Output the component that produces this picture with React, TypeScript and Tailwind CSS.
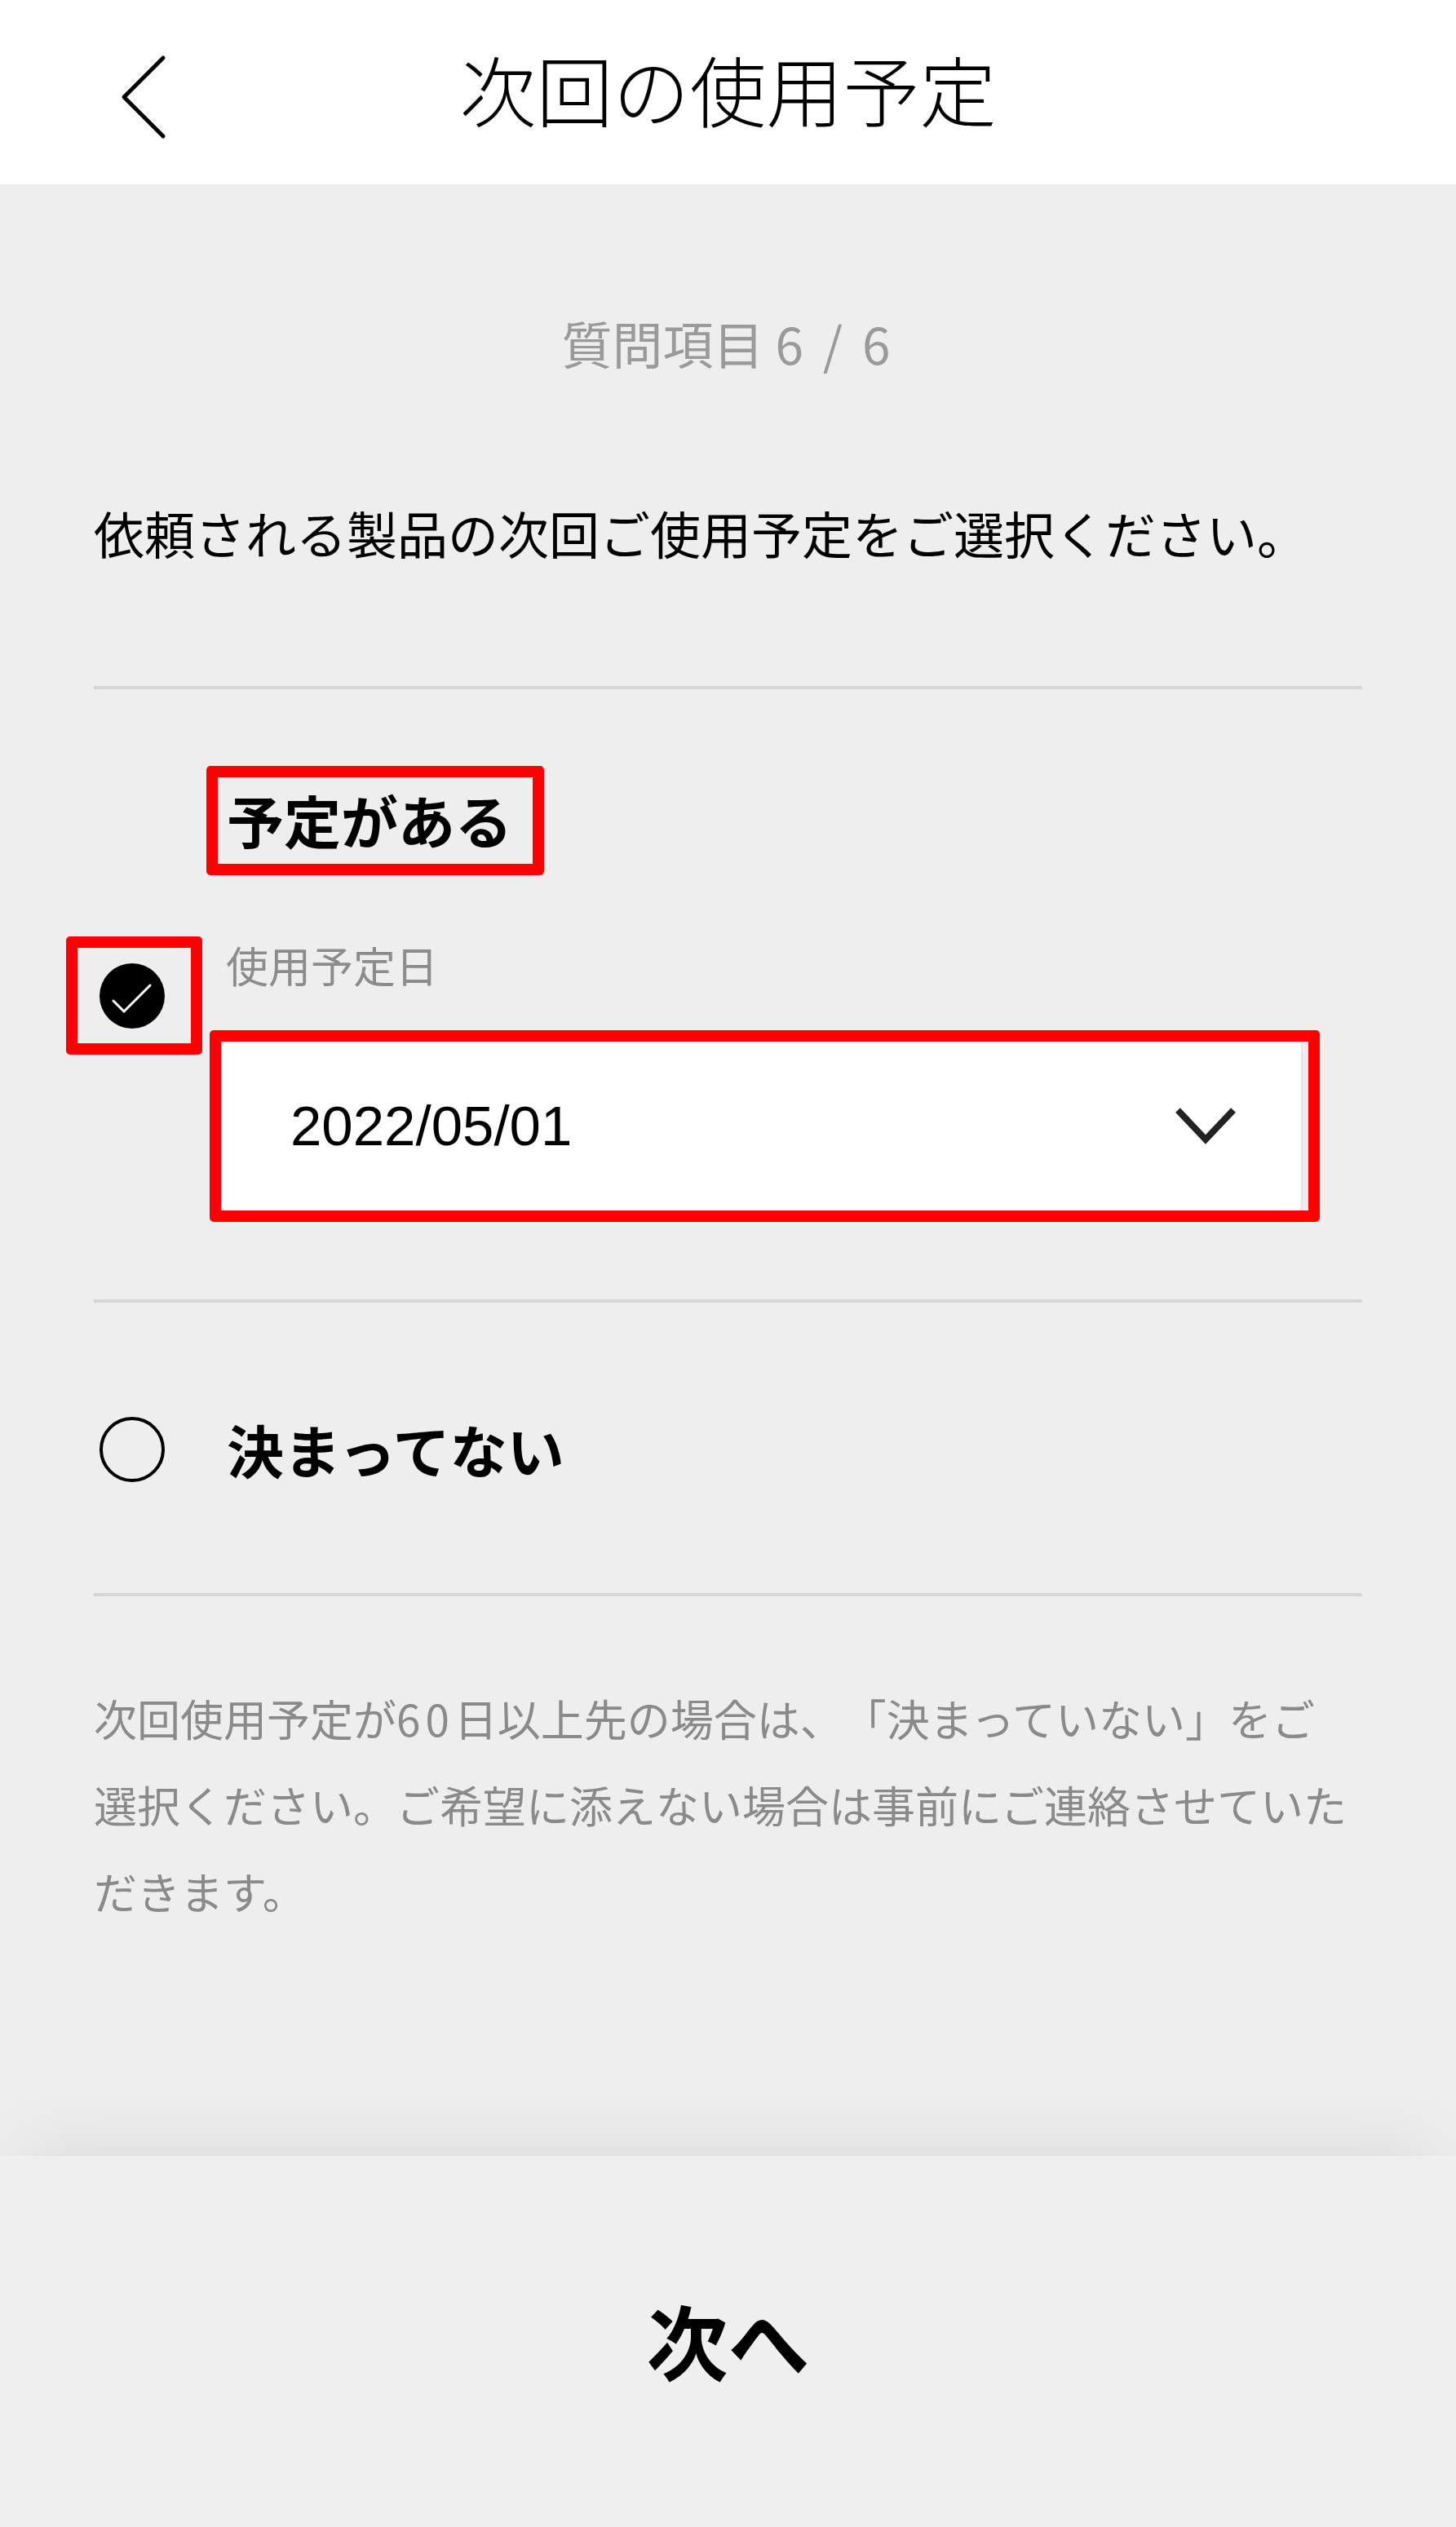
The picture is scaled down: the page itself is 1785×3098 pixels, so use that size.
export default function App() {
  return (
    <div className="flex min-h-[3098px] flex-col bg-[#eeeeee] font-['Noto_Sans_CJK_JP',sans-serif] text-black [text-spacing-trim:space-all]">
      <header className="relative flex h-[226px] items-center justify-center bg-white">
        <button className="absolute left-[146px] top-[66px]" aria-label="戻る">
          <svg width="60" height="108" viewBox="0 0 60 108" fill="none">
            <polyline points="54,5 6,53 54,101" stroke="#000" strokeWidth="5" strokeLinecap="round" strokeLinejoin="round" />
          </svg>
        </button>
        <h1 className="pb-[10px] text-[94px] font-light leading-none">次回の使用予定</h1>
      </header>

      <main className="flex-1 px-[115px]">
        <p className="pt-[163px] text-center text-[62px] leading-none text-[#9a9a9a]">
          質問項目 <span className="tracking-[5px]">6 / 6</span>
        </p>
        <p className="mt-[171px] text-[62px] leading-none">依頼される製品の次回ご使用予定をご選択ください。</p>

        <div className="mt-[157px] h-[4px] bg-[#d6d6d6]" />

        {/* option: 予定がある */}
        <div className="flex pt-[125px] pb-[108px]">
          <div className="w-[157px] shrink-0">
            <div className="relative ml-[7px] mt-[211px] h-[80px] w-[80px]">
              <svg width="80" height="80" viewBox="0 0 80 80">
                <circle cx="40" cy="40" r="40" fill="#000" />
                <polyline points="17,46 30,59 62,27" fill="none" stroke="#fff" strokeWidth="3" strokeLinecap="round" strokeLinejoin="round" />
              </svg>
              <div className="absolute left-[-41px] top-[-33px] h-[145px] w-[167px] rounded-[5px] border-[14px] border-[#ff0000]" />
            </div>
          </div>
          <div className="flex-1">
            <div className="relative inline-block">
              <span className="block pl-[6px] text-[70px] font-bold leading-none">予定がある</span>
              <div className="absolute bottom-[-33px] left-[-19px] right-[-39px] top-[-31px] rounded-[5px] border-[14px] border-[#ff0000]" />
            </div>
            <p className="mt-[117px] pl-[5px] text-[52px] leading-none text-[#8c8c8c]">使用予定日</p>
            <div className="relative mt-[66px] mr-[75px]">
              <div className="flex h-[210px] items-center justify-between rounded-[6px] bg-white pl-[84px] pr-[78px] shadow-[0_1px_4px_rgba(0,0,0,0.12)]">
                <span className="font-['Liberation_Sans',sans-serif] text-[69px] leading-none">2022/05/01</span>
                <svg width="78" height="50" viewBox="0 0 78 50" fill="none">
                  <polyline points="5,6 39,42 73,6" stroke="#222" strokeWidth="8" strokeLinejoin="miter" />
                </svg>
              </div>
              <div className="absolute bottom-[-13px] left-[-15px] right-[-23px] top-[-12px] rounded-[5px] border-[14px] border-[#ff0000]" />
            </div>
          </div>
        </div>

        <div className="h-[4px] bg-[#d6d6d6]" />

        {/* option: 決まってない */}
        <div className="flex items-center pt-[140px] pb-[136px]">
          <div className="w-[157px] shrink-0">
            <div className="ml-[7px] h-[80px] w-[80px] rounded-full border-[4px] border-black" />
          </div>
          <span className="pl-[6px] text-[70px] font-bold leading-none">決まってない</span>
        </div>

        <div className="h-[4px] bg-[#d6d6d6]" />

        <p className="pt-[96px] text-[53px] leading-[106px] text-[#8a8a8a]">
          次回使用予定が<span className="tracking-[6px]">60</span>日以上先の場合は、「決まっていない」をご
          <br />
          選択ください。ご希望に添えない場合は事前にご連絡させていた
          <br />
          だきます。
        </p>
      </main>

      <footer className="flex h-[455px] items-center justify-center bg-[#efefef] shadow-[0_-40px_80px_-30px_rgba(0,0,0,0.08)]">
        <span className="pb-[6px] text-[100px] font-bold leading-none">次へ</span>
      </footer>
    </div>
  )
}
